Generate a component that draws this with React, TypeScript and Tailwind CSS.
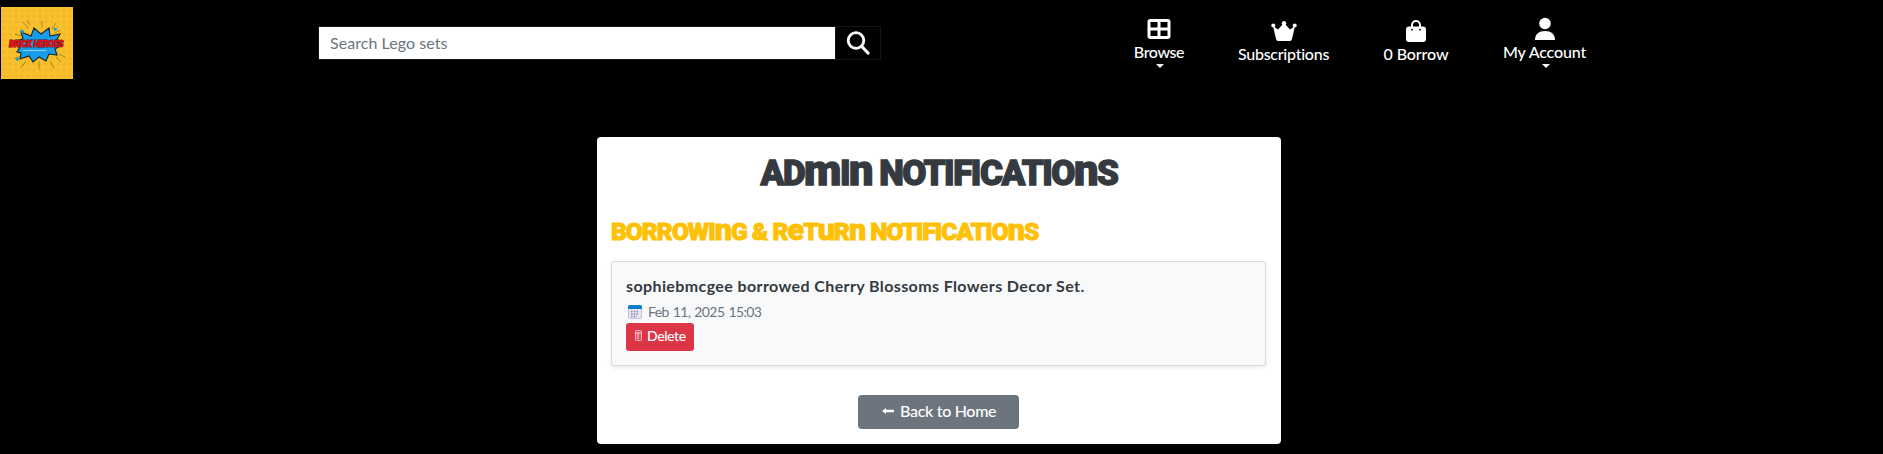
import type { ReactNode } from "react";

const body = "font-['Lato','Open_Sans',sans-serif]";

function Display({ text }: { text: string }) {
  const runs = text.match(/[mneu]+|[^mneu]+/g) ?? [];
  return (
    <>
      {runs.map((run, i) =>
        /^[mneu]/.test(run) ? (
          <span key={i} className="text-[1.24em] leading-[0]">{run}</span>
        ) : (
          <span key={i} className="uppercase">{run}</span>
        ),
      )}
    </>
  );
}

function Caret() {
  return <span className="mt-[2px] ml-[2px] h-0 w-0 border-x-[4px] border-t-[4px] border-x-transparent border-t-white" />;
}

function NavItem({ icon, label, left, width, top, spacing, caret }: { icon: ReactNode; label: string; left: string; width: string; top: string; spacing: string; caret?: boolean }) {
  return (
    <a className={`flex shrink-0 flex-col items-center text-white ${left} ${width} ${top}`}>
      <span className="flex h-6 items-center justify-center">{icon}</span>
      <span className={`mt-px whitespace-nowrap text-base leading-5 font-medium ${spacing}`}>{label}</span>
      {caret && <Caret />}
    </a>
  );
}

function Logo() {
  return (
    <svg viewBox="0 0 72 72" className="ml-px h-[72px] w-[72px] overflow-visible" aria-label="Brick Heroes">
      <defs>
        <pattern id="studs" width="6" height="6" patternUnits="userSpaceOnUse">
          <rect width="6" height="6" fill="#f8c12c" />
          <circle cx="3" cy="3" r="1.6" fill="#f3b42b" />
        </pattern>
      </defs>
      <rect width="72" height="72" fill="url(#studs)" />
      <g stroke="#8a7a2c" strokeWidth=".8">
        <path d="M22 15l5 6M26 13l3 5M41 14v6M55 16l-4 6M59 23l-5 3M14 27l6 2M13 52l7-3M20 61l5-7M38 54v8M49 54l4 7M55 50l5 5M58 47l6 3" />
      </g>
      <path d="M20 25l10 4 3-8 7 6 8-6 1 8 10-2-4 7 6 4-7 4 2 6-8-1-3 7-7-4-6 5-4-6-9 3 1-6-4-1 3-5-5-6 8-2z" fill="#189ee8" stroke="#17242b" strokeWidth="1.1" />
      <path d="M20 23l3 1-2 2zM53 21l3 1-2 2zM15 51l3 1-2 2z" fill="#2ba0c9" stroke="#2ba0c9" />
      <text x="8" y="39.500" fontFamily="Roboto, sans-serif" fontSize="8.6" letterSpacing="-.3" fontWeight="900" fontStyle="italic" fill="#ee1119" stroke="#5b1013" strokeWidth=".9" paintOrder="stroke">BRICK HEROES</text>
      <path d="M22 43.5h23" stroke="#8dd1f2" strokeWidth="1" />
    </svg>
  );
}

export default function App() {
  return (
    <div className={`h-[454px] w-full overflow-hidden bg-black ${body}`}>
      <header className="flex h-[137px] items-start pt-[7px]">
        <Logo />
        <form className="mt-[19px] ml-[245px] flex h-[34px] w-[563px] shrink-0 border border-[#141414]">
          <input className="w-[516px] bg-white pl-[11px] text-base tracking-[0.05px] text-[#6c757d] outline-none placeholder:text-[#6c757d]" placeholder="Search Lego sets" />
          <button type="button" className="flex flex-1 items-center justify-center border-l border-[#141414]">
            <svg viewBox="0 0 24 24" className="h-6 w-6" fill="none" stroke="#fff" strokeWidth="2.800"><circle cx="10" cy="9.500" r="7.8" /><path d="M15.800 15.5L22 22" strokeWidth="3.200" strokeLinecap="round" /></svg>
          </button>
        </form>
        <nav className="flex items-start">
          <NavItem label="Browse" left="ml-[253px]" width="w-[50px]" top="pt-[10px]" spacing="tracking-[-0.4px]" caret
            icon={<svg viewBox="0 0 24 20" className="h-5 w-6" fill="none" stroke="#fff" strokeWidth="3"><rect x="2" y="1.5" width="20" height="17" rx="1.5" /><path d="M12 2v16M2 10h20" /></svg>} />
          <NavItem label="Subscriptions" left="ml-[54px]" width="w-[91px]" top="pt-[12px]" spacing="tracking-[-0.25px]"
            icon={<svg viewBox="0 0 26 20" className="ml-px h-5 w-[26px]" fill="#fff"><path d="M2 5l5 3.5L12 3h2l5 5.5L24 5l-3 13q-.4 2-2 2H7q-1.600 0-2-2z" /><circle cx="2.300" cy="4.500" r="2" /><circle cx="13" cy="2.200" r="2.200" /><circle cx="23.700" cy="4.500" r="2" /></svg>} />
          <NavItem label="0 Borrow" left="ml-[54px]" width="w-[66px]" top="pt-[12px]" spacing="tracking-[-0.1px]"
            icon={<svg viewBox="0 0 20 22" className="h-[22px] w-5"><path d="M6 9V5a4 4 0 018 0v4" fill="none" stroke="#fff" strokeWidth="2" /><rect y="6.500" width="20" height="15.500" rx="3" fill="#fff" /><circle cx="6" cy="9.700" r=".9" /><circle cx="14" cy="9.700" r=".9" /></svg>} />
          <NavItem label="My Account" left="ml-[54px]" width="w-[83px]" top="pt-[10px]" spacing="tracking-[-0.15px]" caret
            icon={<svg viewBox="0 0 20 24" className="h-6 w-5" fill="#fff"><circle cx="10" cy="6.500" r="5.800" /><path d="M0 23c0-6 4-9 10-9s10 3 10 9z" /></svg>} />
        </nav>
      </header>
      <main className="ml-[597px] flex h-[307px] w-[684px] flex-col rounded-[4px] bg-white px-[14px]">
        <h1 className="mt-[14px] h-[46px] text-center font-['Roboto',sans-serif] text-[35px] leading-[46px] font-black tracking-[-1.5px] whitespace-nowrap text-[#343a40] [-webkit-text-stroke:1.3px_#343a40]"><Display text="Admin Notifications" /></h1>
        <h2 className="mt-[19px] h-[30px] font-['Roboto',sans-serif] text-[24.500px] leading-[31px] font-black tracking-[-0.95px] whitespace-nowrap text-[#ffc107] [-webkit-text-stroke:1px_#ffc107]"><Display text="Borrowing & Return Notifications" /></h2>
        <article className="mt-[15px] flex h-[105px] w-[655px] shrink-0 flex-col items-start rounded-[3px] border border-[#d6dade] bg-[#f8f9fa] px-[14px] shadow-[0_2px_4px_rgba(0,0,0,0.08)]">
          <h3 className="mt-[12px] text-base leading-6 font-bold tracking-[0.39px] whitespace-nowrap text-[#343a40]">sophiebmcgee borrowed Cherry Blossoms Flowers Decor Set.</h3>
          <p className="mt-[3px] flex h-[21px] items-center pl-[2px] text-sm text-[#6c757d]">
            <svg viewBox="0 0 14 14" className="mr-[6px] h-[14px] w-[14px]"><rect x=".5" y=".5" width="13" height="13" rx="1.500" fill="#e8e6f1" stroke="#c5bcd7" /><path d="M0 4V2q0-2 2-2h10q2 0 2 2v2z" fill="#087fc7" /><path d="M3 6.500h8M3 9h8M3 11.500h6" stroke="#8d7fac" strokeWidth="1.300" strokeDasharray="1.500 1.200" /></svg>
            <span className="tracking-[-0.6px] whitespace-nowrap [word-spacing:1px]">Feb 11, 2025 15:03</span>
          </p>
          <button className="mt-px flex h-[28px] w-[68px] items-center rounded-[3px] bg-[#dc3545] pb-[3px] pl-[9px] text-sm font-medium text-white">
            <svg viewBox="0 0 7 11" className="mr-[5px] h-[11px] w-[7px]"><rect x=".5" y=".5" width="6" height="10" rx="1" fill="#df5067" stroke="#f0b8bd" /><path d="M.5 3h6M3 3v6" stroke="#f8d9d6" /></svg>
            <span className="tracking-[-0.4px]">Delete</span>
          </button>
        </article>
        <a className="mt-[29px] ml-[247px] flex h-[34px] w-[161px] shrink-0 items-center rounded-[4px] bg-[#6c757d] pb-[2px] pl-[24px] text-base font-medium text-white">
          <svg viewBox="0 0 12 6" className="mr-[6px] h-[6px] w-3" fill="#fff"><path d="M0 3l4-3v1.800h8v2.400H4V6z" /></svg>
          <span className="tracking-[-0.3px] whitespace-nowrap">Back to Home</span>
        </a>
      </main>
    </div>
  );
}
